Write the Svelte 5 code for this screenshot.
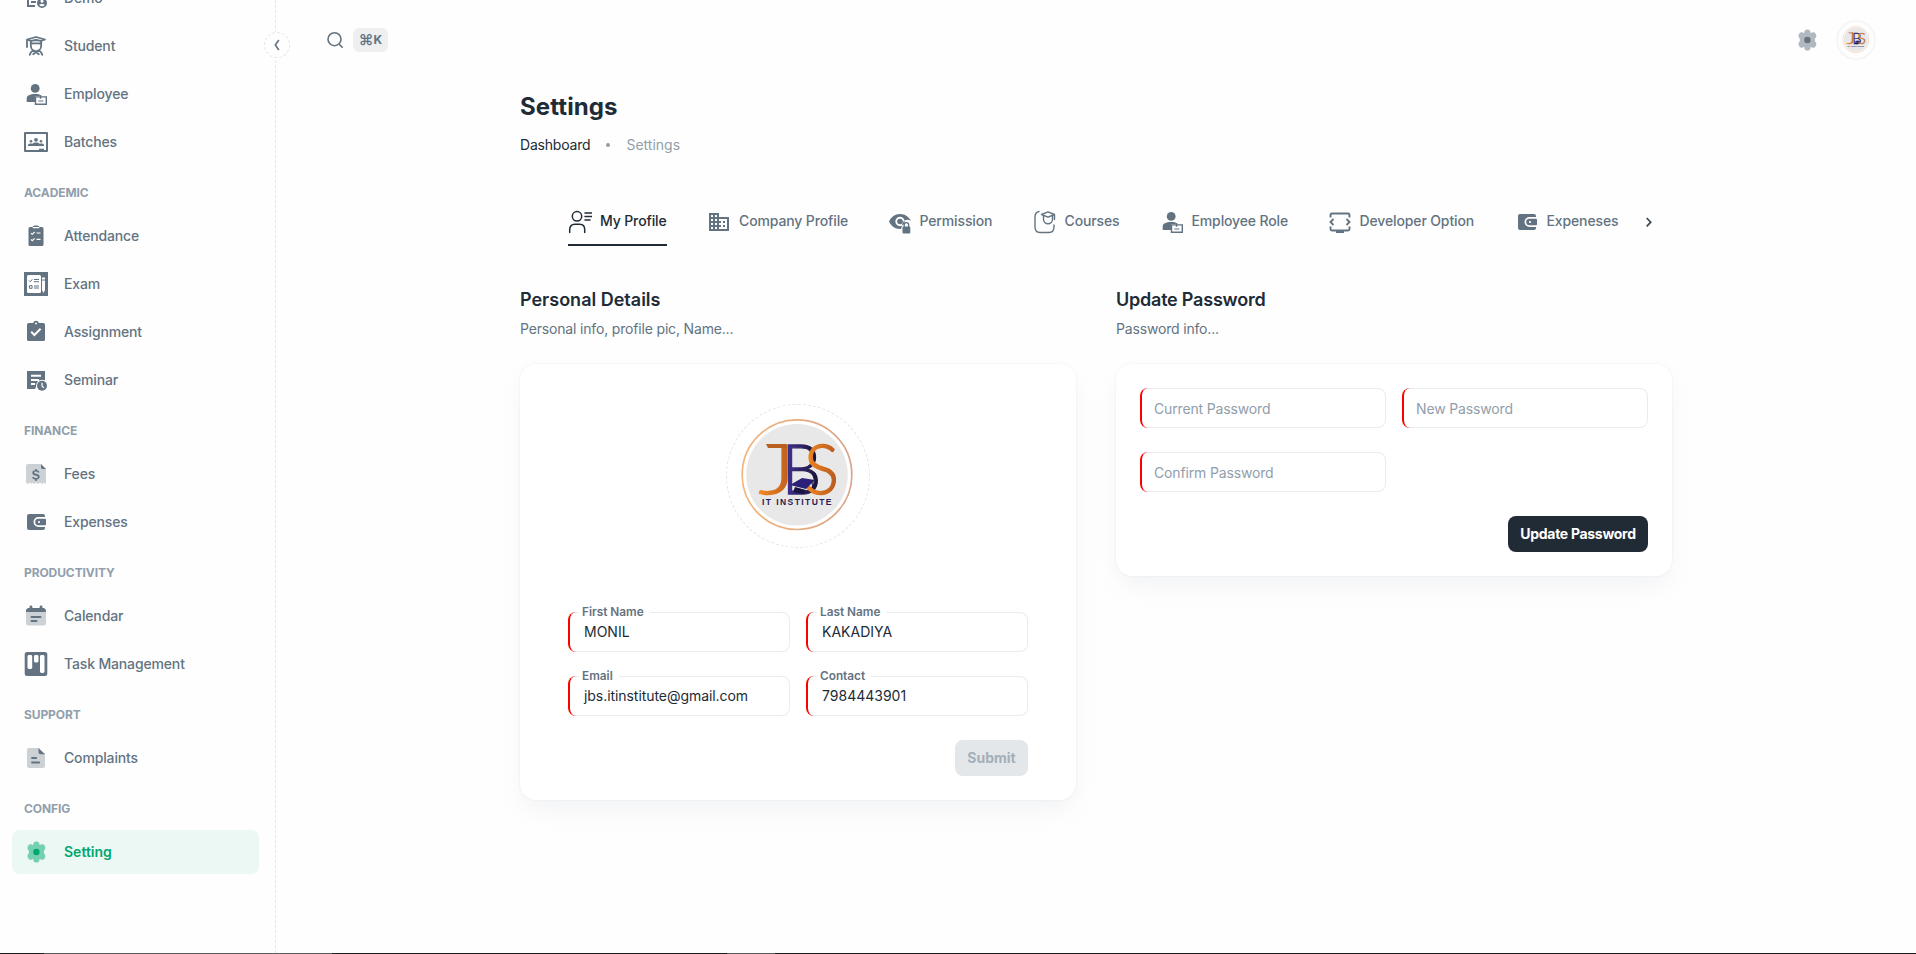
<script>
  const nav = [
    { items: [['demo', 'Demo'], ['student', 'Student'], ['employee', 'Employee'], ['batches', 'Batches']] },
    { head: 'ACADEMIC', items: [['attendance', 'Attendance'], ['exam', 'Exam'], ['assignment', 'Assignment'], ['seminar', 'Seminar']] },
    { head: 'FINANCE', items: [['fees', 'Fees'], ['wallet', 'Expenses']] },
    { head: 'PRODUCTIVITY', items: [['calendar', 'Calendar'], ['kanban', 'Task Management']] },
    { head: 'SUPPORT', items: [['complaints', 'Complaints']] },
    { head: 'CONFIG', items: [['gear', 'Setting']] }
  ];
  const tabs = [
    { icon: 'profile', label: 'My Profile', w: 99 },
    { icon: 'company', label: 'Company Profile', w: 140.5 },
    { icon: 'permission', label: 'Permission', w: 105 },
    { icon: 'courses', label: 'Courses', w: 87 },
    { icon: 'employee', label: 'Employee Role', w: 128 },
    { icon: 'developer', label: 'Developer Option', w: 147 },
    { icon: 'wallet', label: 'Expeneses', w: 102 }
  ];
  const details = [['First Name', 'MONIL'], ['Last Name', 'KAKADIYA'], ['Email', 'jbs.itinstitute@gmail.com'], ['Contact', '7984443901']];
  const passwords = ['Current Password', 'New Password', 'Confirm Password'];
</script>

{#snippet icon(name)}
  <svg class="ic" viewBox="0 0 24 24" fill="currentColor">
    {#if name === 'demo'}
      <path d="M3 3h18v8h-2V5H5v14h6v2H3z" /><path d="M7 15h5v2H7zM7 11h5v2H7z" />
      <path fill-rule="evenodd" d="M18 12a5 5 0 1 0 0 10 5 5 0 0 0 0-10zm0 1.700a1.500 1.500 0 1 1 0 3 1.500 1.500 0 0 1 0-3zm0 6.600a3.600 3.600 0 0 1-2.800-1.400c.8-1.200 4.800-1.200 5.600 0A3.600 3.600 0 0 1 18 20.300z" />
    {:else if name === 'student'}
      <g fill="none" stroke="currentColor" stroke-width="1.800" stroke-linejoin="round" stroke-linecap="round">
        <path d="M3 5.500 12 3l9 2.500-4 1.300-5-.8-5 .8zM3 5.800V13" />
        <path d="M6.800 7v4.500c0 3.400 2.400 5.600 5.200 5.600s5.200-2.200 5.200-5.600V7M7 9.500c3 0 6-.2 10 0M5.800 20.800c.4-2 1.800-3.700 4-4.300l5 3.800M18.200 20.800c-.4-2-1.800-3.700-4-4.300l-5 3.800" />
      </g>
    {:else if name === 'employee'}
      <circle cx="11.200" cy="6.400" r="4.400" /><path d="M2.700 20v-3.200c0-3.200 3.200-4.700 8.500-4.700 1.800 0 3.300.1 4.600.5V14H11v6z" />
      <path fill-rule="evenodd" d="M10.800 14.200h5V13h1.500v1.200H23V23H10.800zm1.400 1.400v6h9.400v-6h-4.300v1.200h-1.500v-1.200z" /><path d="M14.300 18.500h5v1h-5z" />
    {:else if name === 'batches'}
      <path fill-rule="evenodd" d="M1 2h22a1 1 0 0 1 1 1v18a1 1 0 0 1-1 1H1a1 1 0 0 1-1-1V3a1 1 0 0 1 1-1zm1 2v16h13v-1.200h5V20h2V4z" />
      <circle cx="12" cy="9.800" r="1.900" /><circle cx="7" cy="11.200" r="1.300" /><circle cx="17" cy="11.200" r="1.300" />
      <path d="M4 16v-.9c0-1.500 2.500-2.100 4.300-1.400 1.800-1.700 5.600-1.700 7.400 0 1.800-.7 4.300-.1 4.300 1.400v.9z" />
    {:else if name === 'attendance'}
      <path d="M6 3h2.500c.5-1 1.500-1.500 3.500-1.500s3 .5 3.500 1.500H18a1.500 1.500 0 0 1 1.500 1.500v16A1.500 1.500 0 0 1 18 22H6a1.500 1.500 0 0 1-1.500-1.500v-16A1.500 1.500 0 0 1 6 3z" />
      <path d="M8.700 3.700h6.600M12.500 9h4M12.500 15.300h4M7 9.200l1.300 1.100L10.600 8M7 15.500l1.300 1.100 2.300-2.300" stroke="#fff" stroke-width="1.200" fill="none" />
    {:else if name === 'exam'}
      <path d="M0 0h24v24H0z" /><rect x="3" y="3" width="14" height="18" rx="1.500" fill="#fff" /><path d="M18 8.500h3V18l-1.500 3L18 18zM18 5.500h3v2h-3z" fill="#fff" />
      <path d="M5 8.500l1.300 1.300 2-2.500M10 7.500h5M10 9.700h5M10 14h5M10 16h5M5.500 13.700h2.600v2.600H5.500z" stroke="currentColor" stroke-width="1" fill="none" />
    {:else if name === 'assignment'}
      <path d="M4.500 3h4.600a3 3 0 0 1 5.800 0h4.600A1.500 1.500 0 0 1 21 4.500v15a1.500 1.500 0 0 1-1.500 1.500h-15A1.500 1.500 0 0 1 3 19.500v-15A1.500 1.500 0 0 1 4.500 3z" />
      <circle cx="12" cy="3.500" r=".9" fill="#fff" /><path d="m7.200 11.800 3.200 3.200 6.200-6.200" stroke="#fff" stroke-width="2" fill="none" />
    {:else if name === 'seminar'}
      <path d="M3 3h18v9.500H15l-4 8.500H3z" /><path d="M7 7.800h10M7 12h8M7 16h4" stroke="#fff" stroke-width="1.900" />
      <circle cx="18" cy="17.700" r="5.900" fill="#fff" /><circle cx="18" cy="17.700" r="5" /><path d="M18 14.800v3.200l1.800 1.900" stroke="#fff" stroke-width="1.200" fill="none" />
    {:else if name === 'fees'}
      <path opacity=".32" d="M4 2h13v4.500h5V22l-2-1.400-2 1.400-2-1.400-2 1.400-2-1.400-2 1.400-2-1.400L8 22l-2-1.400L4 22l-2-1.400V4a2 2 0 0 1 2-2z" />
      <path d="M17 2l5 5h-3.500A1.500 1.500 0 0 1 17 5.500zM11.200 7h1.600v1.200c1.500.2 2.500 1.100 2.700 2.300h-1.800c-.3-.7-.9-1-1.800-1-1 0-1.700.4-1.700 1.100 0 1.800 5.500.5 5.500 4.100 0 1.500-1.100 2.500-2.900 2.800V19h-1.600v-1.500c-1.800-.2-2.900-1.200-3-2.600H10c.2.800 1 1.200 2 1.200 1.100 0 1.800-.5 1.800-1.200 0-2-5.500-.6-5.500-4.200 0-1.300 1.100-2.300 2.900-2.500z" />
    {:else if name === 'wallet'}
      <path d="M5 4h14a2 2 0 0 1 2 2v1h-6.500a5 5 0 0 0 0 10H21v1a2 2 0 0 1-2 2H5a2 2 0 0 1-2-2V6a2 2 0 0 1 2-2z" />
      <path fill-rule="evenodd" d="M14.500 8.700H21a1 1 0 0 1 1 1v4.600a1 1 0 0 1-1 1h-6.500a3.300 3.300 0 0 1 0-6.600zm.5 2.200a1.100 1.100 0 1 0 0 2.200 1.100 1.100 0 0 0 0-2.200z" />
    {:else if name === 'calendar'}
      <path opacity=".32" d="M2 8h20v11a2.500 2.500 0 0 1-2.500 2.500h-15A2.500 2.500 0 0 1 2 19z" />
      <path d="M2 8c0-3.200 1-4 3.500-4V3a1.200 1.200 0 0 1 2.900 0v1h7.200V3a1.200 1.200 0 0 1 2.900 0v1C21 4 22 4.800 22 8z" />
      <path d="M7.500 13h9M7.500 17h5" stroke="currentColor" stroke-width="2" stroke-linecap="round" />
    {:else if name === 'kanban'}
      <rect x=".7" y="0" width="22.600" height="24" rx="2.500" /><rect x="3.500" y="3" width="4.700" height="14" rx="1.400" fill="#fff" /><rect x="10" y="3" width="4.500" height="7.500" rx="1.400" fill="#fff" /><rect x="16" y="3" width="4.500" height="18" rx="1.400" fill="#fff" />
    {:else if name === 'complaints'}
      <path opacity=".32" d="M5 2h10v5h6v13a2 2 0 0 1-2 2H5a2 2 0 0 1-2-2V4a2 2 0 0 1 2-2z" />
      <path d="m14.500 2 6.500 6.300h-4.500a2 2 0 0 1-2-2z" /><path d="M8 12h4.200M8 16.500h7.200" stroke="currentColor" stroke-width="1.800" stroke-linecap="round" />
    {:else if name === 'gear'}
      <g opacity=".5"><path d="M9.300 4.500a3.100 3.100 0 0 1 6.200 0l.3.700a3.100 3.100 0 0 1 5 .8c1 1.700.6 3.400-.8 4.400v3.200c1.400 1 1.800 2.700.8 4.400a3.100 3.100 0 0 1-5 .8l-.3.700a3.100 3.100 0 0 1-6.200 0l-.3-.7a3.100 3.100 0 0 1-5-.8c-1-1.700-.6-3.400.8-4.400v-3.200C3.400 9.400 3 7.700 4 6a3.100 3.100 0 0 1 5-.8z" /></g>
      <circle cx="12.400" cy="12" r="3.200" />
    {:else if name === 'profile'}
      <g fill="none" stroke="currentColor" stroke-width="1.500" stroke-linecap="round"><circle cx="9" cy="6.300" r="4.700" /><path d="M1.700 22.500v-3c0-3.300 2-5.300 5-5.300h5c3 0 5 2 5 5.300v3M17 3h7M17 6.500h7M17 10h5" /></g>
    {:else if name === 'company'}
      <path fill-rule="evenodd" d="M2 3h10v4h10v14H2zm2 2v2h2V5zm4 0v2h2V5zM4 9v2h2V9zm4 0v2h2V9zm-4 4v2h2v-2zm4 0v2h2v-2zm-4 4v2h2v-2zm4 0v2h2v-2zm4-8v2h2v2h-2v2h2v2h-2v2h8V9zm4 2h2v2h-2zm0 4h2v2h-2z" />
    {:else if name === 'permission'}
      <path fill-rule="evenodd" d="M12 4c5 0 9 2.800 11 7-1-.8-2.200-1.200-3.500-1.200-2.300 0-4.200 1.400-5 3.500l-1.300 5.600L12 19C7 19 3 16 1 11.500 3 7 7 4 12 4zm0 2.800a4.700 4.700 0 1 0 0 9.400 4.700 4.700 0 0 0 0-9.400z" />
      <circle cx="12" cy="11.500" r="2.800" /><rect x="14" y="16" width="9" height="8" fill="#fefefe" /><rect x="14.500" y="16.500" width="7.800" height="7" rx="1" /><path d="M16.200 17v-2.200a2.200 2.200 0 0 1 4.400 0V17" fill="none" stroke="currentColor" stroke-width="1.300" />
    {:else if name === 'courses'}
      <g fill="none" stroke="currentColor" stroke-width="1.400" stroke-linecap="round" stroke-linejoin="round"><path d="M6 1.500C3.200 2 2 3.500 2 7v9.500c0 4.500 1.500 6 5 6h9c3.500 0 5-1.500 5-6V15M8.500 4.500 15 1.800l6.500 2.700L15 7.200zM21.500 4.500v5M10.500 5.500v3.800a4.500 4.500 0 0 0 9 0V5.500" /></g>
    {:else if name === 'developer'}
      <path d="M2.500 7V4.500A1.500 1.500 0 0 1 4 3h16a1.500 1.500 0 0 1 1.500 1.500V7M2.500 16v2.500A1.500 1.500 0 0 0 4 20h16a1.500 1.500 0 0 0 1.500-1.500V16M5.500 8.500l-3 3 3 3M18.500 8.500l3 3-3 3" transform="translate(0 .5)" fill="none" stroke="currentColor" stroke-width="1.900" /><path d="M8 20h8v3H8z" />
    {/if}
  </svg>
{/snippet}

{#snippet logo(id)}
  <svg class="logo" viewBox="0 0 126 126">
    <defs>
      <linearGradient id="{id}o" x1="0" x2="1"><stop offset="0" stop-color="#f58a1f" /><stop offset="1" stop-color="#b3561f" /></linearGradient>
      <linearGradient id="{id}b" x1="0" x2="1"><stop offset="0" stop-color="#46349a" /><stop offset="1" stop-color="#15112e" /></linearGradient>
      <linearGradient id="{id}r" x1="0" x2="1"><stop offset="0" stop-color="#f5b478" /><stop offset="1" stop-color="#d9a488" /></linearGradient>
    </defs>
    <circle cx="62" cy="61.700" r="54.800" fill="#fff" stroke="url(#{id}r)" stroke-width="1.700" />
    <circle cx="62" cy="61.700" r="50.800" fill="#e8e8e8" />
    <g font-family="Lato, sans-serif" font-size="69" font-weight="300" stroke-width="1.300">
      <text x="23.500" y="81" textLength="37" lengthAdjust="spacingAndGlyphs" fill="url(#{id}o)" stroke="url(#{id}o)">J</text>
      <text x="47" y="81" textLength="39" lengthAdjust="spacingAndGlyphs" fill="url(#{id}b)" stroke="url(#{id}b)">B</text>
      <text x="69" y="81" textLength="35" lengthAdjust="spacingAndGlyphs" fill="url(#{id}o)" stroke="url(#{id}o)">S</text>
    </g>
    <path d="M31 31h20v4H33z" fill="#b8601f" />
    <path d="m55 72 12-7 13 2-9 9z" fill="#2c2178" /><path d="m60 74 11 3-2 4-11-2z" fill="#191442" /><path d="m77 67 .5 8" stroke="#191442" />
    <text x="27" y="92" font-family="Liberation Sans, sans-serif" font-size="8.500" font-weight="700" textLength="69.500" fill="#292052">IT INSTITUTE</text>
  </svg>
{/snippet}

<div class="app">
  <aside>
    <nav>
      {#each nav as group}
        {#if group.head}<h6>{group.head}</h6>{/if}
        {#each group.items as [ic, label]}
          <a class:active={ic === 'gear'}>{@render icon(ic)}<span>{label}</span></a>
        {/each}
      {/each}
    </nav>
    <button class="collapse" aria-label="Collapse"><svg viewBox="0 0 16 16" width="16" height="16"><path d="M9.500 3.500 6.300 8l3.200 4.500" fill="none" stroke="#637381" stroke-width="1.600" stroke-linecap="round" /></svg></button>
  </aside>

  <div class="page">
    <header>
      <svg width="20" height="20" viewBox="0 0 20 20" fill="none" stroke="#637381" stroke-width="1.600" stroke-linecap="round"><circle cx="9.500" cy="9.200" r="6.500" /><path d="m14.500 14.500 2.600 2.600" /></svg>
      <kbd><b>⌘</b>K</kbd>
      <div class="tools">{@render icon('gear')}<div class="avatar">{@render logo('s')}</div></div>
    </header>

    <main>
      <h1>Settings</h1>
      <div class="crumbs"><span>Dashboard</span><i></i><span class="muted">Settings</span></div>
      <div class="tabs">
        {#each tabs as tab, n}
          <div class="tab" class:on={n === 0} style="width:{tab.w}px">{@render icon(tab.icon)}<span>{tab.label}</span></div>
        {/each}
        <svg class="next" width="18" height="18" viewBox="0 0 18 18"><path d="m6.700 5 4 4.200-4 4.200" fill="none" stroke="#3d4954" stroke-width="1.700" /></svg>
      </div>

      <div class="columns">
        <section>
          <h2>Personal Details</h2>
          <p>Personal info, profile pic, Name...</p>
          <div class="card personal">
            <div class="photo">{@render logo('l')}</div>
            <div class="fields">
              {#each details as [label, value]}
                <div class="field"><label>{label}</label><span class:mail={label === 'Email'}>{value}</span></div>
              {/each}
            </div>
            <button class="btn off">Submit</button>
          </div>
        </section>
        <section>
          <h2 class="tight">Update Password</h2>
          <p>Password info...</p>
          <div class="card">
            <div class="fields">
              {#each passwords as label}
                <div class="field empty"><span>{label}</span></div>
              {/each}
            </div>
            <button class="btn">Update Password</button>
          </div>
        </section>
      </div>
    </main>
  </div>
  <div class="edge"></div>
</div>

<style>
  :global(body) { margin: 0; background: #fefefe; overflow: hidden; }
  * { box-sizing: border-box; }
  .app { position: relative; width: 1916px; height: 954px; display: flex; overflow: hidden; font: 400 14px/22px Inter, sans-serif; color: #212b36; background: #fefefe; }
  aside { position: relative; width: 276px; flex: none; background: linear-gradient(#e5e8eb 60%, transparent 0) right top / 1px 5px repeat-y; }
  nav { width: 259px; margin-top: -24px; padding-left: 12px; }
  nav a { display: flex; align-items: center; gap: 16px; height: 44px; margin-bottom: 4px; padding-left: 12px; border-radius: 8px; color: #637381; font-weight: 500; letter-spacing: -.15px; }
  nav a.active { background: #ebf8f4; color: #00a76f; font-weight: 600; letter-spacing: 0; }
  h6 { margin: 0; height: 46px; padding: 16px 12px 0; font-size: 12px; line-height: 18px; font-weight: 700; color: #919eab; letter-spacing: -.1px; }
  .ic { width: 24px; height: 24px; flex: none; }
  .collapse { position: absolute; left: 264px; top: 32px; width: 26px; height: 26px; padding: 0; display: grid; place-items: center; border: 1px dashed #e3e6e9; border-radius: 50%; background: #fefefe; }
  .page { flex: 1; display: flex; flex-direction: column; }
  header { height: 80px; display: flex; align-items: center; padding: 0 40px 0 49px; }
  kbd { display: flex; align-items: center; justify-content: center; margin-left: 8px; width: 35px; height: 24px; border-radius: 6px; background: #edeff1; color: #637381; font: 700 12px/24px Inter, sans-serif; }
  kbd b { font-size: 15px; font-weight: 600; line-height: 22px; }
  .tools { margin-left: auto; display: flex; align-items: center; gap: 17px; color: #637381; }
  .avatar { width: 40px; height: 40px; border: 2px solid #f4f5f6; border-radius: 50%; padding: 3px; }
  .logo { display: block; width: 100%; height: 100%; }
  main { width: 1152px; margin: 0 auto; padding-top: 9px; }
  h1 { margin: 0; font-size: 24px; line-height: 36px; font-weight: 700; letter-spacing: .1px; }
  .crumbs { display: flex; align-items: center; height: 22px; margin-top: 9px; letter-spacing: -.2px; }
  .crumbs i { width: 4px; height: 4px; border-radius: 50%; background: #919eab; margin: 0 16px; }
  .muted { color: #919eab; letter-spacing: 0; }
  .tabs { display: flex; gap: 40px; height: 48px; margin: 42px 0 0 48px; }
  .tab { display: flex; align-items: center; gap: 8px; flex: none; height: 48px; font-weight: 500; color: #637381; white-space: nowrap; letter-spacing: -.13px; }
  .tab span { margin-top: -2px; }
  .tab.on { border-bottom: 2px solid #212b36; padding-top: 2px; color: #212b36; }
  .next { margin: 15px 0 0 -17px; }
  .columns { display: grid; grid-template-columns: 556px 556px; gap: 40px; align-items: start; margin-top: 40px; }
  h2 { margin: 0; font-size: 18px; line-height: 28px; font-weight: 600; }
  .tight { letter-spacing: -.22px; }
  p { margin: 4px 0 0; color: #637381; letter-spacing: -.17px; }
  .card { margin-top: 24px; padding: 24px; border-radius: 16px; background: #fff; box-shadow: 0 0 2px rgba(145, 158, 171, .2), 0 12px 24px -4px rgba(145, 158, 171, .12); display: flex; flex-direction: column; }
  .personal { padding: 40px 48px 24px; }
  .photo { align-self: center; width: 144px; height: 144px; margin-bottom: 64px; padding: 8px; border: 1px dashed #e0e4e8; border-radius: 50%; }
  .fields { display: grid; grid-template-columns: 1fr 1fr; gap: 24px 16px; }
  .field { position: relative; isolation: isolate; height: 40px; padding-left: 14px; line-height: 40px; border-left: 2px solid #f00; border-radius: 8px; }
  .field::before { content: ""; position: absolute; z-index: -1; inset: 0 0 0 -2px; border: 1px solid rgba(145, 158, 171, .2); border-left-color: transparent; border-radius: 8px; }
  .field label { position: absolute; left: 9px; top: -9px; padding: 0 6px 0 3px; background: #fff; color: #637381; font-size: 11.800px; font-weight: 600; line-height: 18px; }
  .mail { letter-spacing: -.06px; }
  .empty { color: #919eab; line-height: 42px; padding-left: 12px; letter-spacing: -.15px; }
  .btn { align-self: flex-end; height: 36px; margin-top: 24px; padding: 0; border: 0; border-radius: 8px; background: #212b36; color: #fff; font: 700 14px/36px Inter, sans-serif; letter-spacing: -.3px; text-align: center; width: 140px; white-space: nowrap; }
  .off { width: 73px; background: #e3e7ea; color: #a4afb9; letter-spacing: 0; }
  .edge { position: absolute; left: 0; bottom: 0; width: 100%; height: 1px; background: linear-gradient(90deg, #1b1b1b 44px, #5c5c5c 44px 332px, #1b1b1b 332px 727px, #5c5c5c 727px 775px, #1b1b1b 775px); }
</style>
